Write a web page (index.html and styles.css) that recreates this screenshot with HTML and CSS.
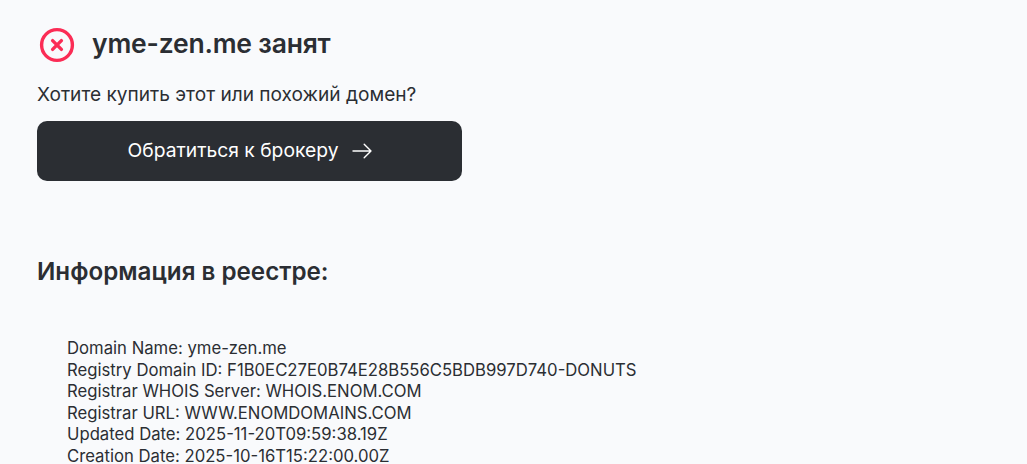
FILE: index.html
```html
<!DOCTYPE html>
<html lang="ru">
<head>
<meta charset="utf-8">
<title>yme-zen.me занят</title>
<link rel="stylesheet" href="styles.css">
</head>
<body>
<main class="page">
  <div class="status">
    <svg class="status-icon" width="36" height="36" viewBox="0 0 36 36" fill="none" aria-hidden="true">
      <circle cx="18" cy="18" r="15.4" stroke="#fb2c55" stroke-width="3.4"/>
      <path d="M13.6 13.6 22.4 22.4M22.4 13.6 13.6 22.4" stroke="#fb2c55" stroke-width="3.4" stroke-linecap="round"/>
    </svg>
    <h1 class="status-title">yme-zen.me занят</h1>
  </div>
  <p class="lead">Хотите купить этот или похожий домен?</p>
  <a class="broker" href="#">
    <span class="broker-label">Обратиться к брокеру</span>
    <svg width="20" height="16" viewBox="0 0 20 16" fill="none" aria-hidden="true">
      <path d="M1 8H19M12.2 1.2 19 8l-6.800 6.800" stroke="#fff" stroke-width="1.4" stroke-linecap="round" stroke-linejoin="round"/>
    </svg>
  </a>
  <h2 class="registry-title">Информация в реестре:</h2>
  <pre class="whois">Domain Name: yme-zen.me
Registry Domain ID: F1B0EC27E0B74E28B556C5BDB997D740-DONUTS
Registrar WHOIS Server: WHOIS.ENOM.COM
Registrar URL: WWW.ENOMDOMAINS.COM
Updated Date: 2025-11-20T09:59:38.19Z
Creation Date: 2025-10-16T15:22:00.00Z</pre>
</main>
</body>
</html>
```
FILE: styles.css
```css
html, body {
  margin: 0;
  height: 100%;
  overflow: hidden;
  background: #f9fafc;
}
body {
  font-family: Inter, "Noto Sans", sans-serif;
  color: #2b2e33;
}
.page {
  padding: 23px 0 0 37px;
}
.status {
  display: flex;
  align-items: center;
  gap: 17px;
  height: 40px;
}
.status-icon {
  flex: none;
  margin-left: 2px;
  margin-top: 4px;
}
.status-title {
  margin: 0;
  font-size: 26.5px;
  font-weight: 600;
  letter-spacing: -0.2px;
}
.lead {
  margin: 19px 0 0;
  font-size: 19.1px;
  line-height: 24px;
}
.broker {
  display: flex;
  align-items: center;
  justify-content: center;
  gap: 13px;
  box-sizing: border-box;
  width: 425px;
  height: 60px;
  margin-top: 15px;
  border-radius: 10px;
  background: #2b2e33;
  color: #fff;
  font-size: 19.3px;
  text-decoration: none;
}
.broker-label {
  padding-bottom: 2px;
}
.registry-title {
  margin: 76px 0 0;
  font-size: 24.2px;
  line-height: 30px;
  font-weight: 600;
}
.whois {
  margin: 51px 0 0 30px;
  font-family: inherit;
  font-size: 16.7px;
  line-height: 21.6px;
}
```
